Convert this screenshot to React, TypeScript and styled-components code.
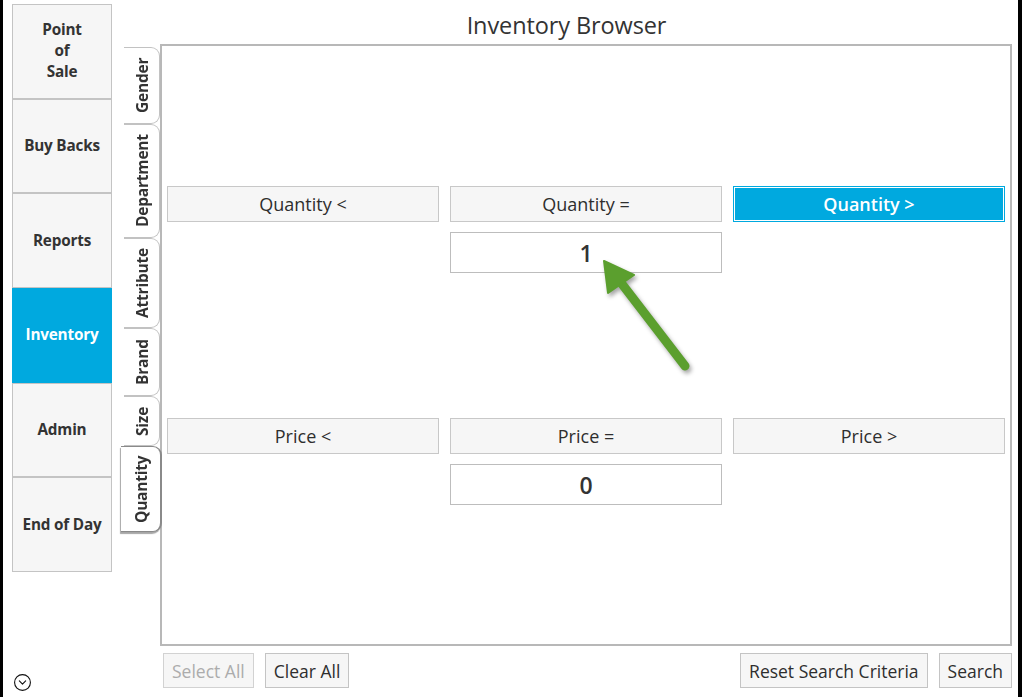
import React from "react";
import styled, { createGlobalStyle } from "styled-components";
import { CircleChevronDown } from "lucide-react";

const Global = createGlobalStyle`
  html, body { margin: 0; padding: 0; background: #fff; }
  body { font-family: "Open Sans", "Noto Sans", sans-serif; color: #333; }
  * { box-sizing: border-box; }
`;

const Frame = styled.div`
  width: 1022px;
  height: 697px;
  display: flex;
  border-left: 3px solid #000;
  border-right: 4px solid #000;
  background: #fff;
  overflow: hidden;
`;

const Sidebar = styled.nav`
  width: 109px;
  padding: 4px 0 6px 9px;
  display: flex;
  flex-direction: column;
`;

const NavList = styled.div`
  height: 568px;
  display: flex;
  flex-direction: column;
`;

const NavButton = styled.div<{ $active?: boolean }>`
  flex: 1;
  display: flex;
  align-items: center;
  justify-content: center;
  text-align: center;
  font-weight: 700;
  font-size: 15.3px;
  line-height: 21px;
  letter-spacing: -0.2px;
  padding-bottom: 1px;
  color: ${(p) => (p.$active ? "#fff" : "#333")};
  background: ${(p) => (p.$active ? "#00a9df" : "#f6f6f6")};
  border: 1px solid ${(p) => (p.$active ? "#00a9df" : "#c4c4c4")};
`;

const Expander = styled.div`
  margin-top: auto;
  padding-left: 1px;
  height: 18px;
  color: #111;
  display: flex;
`;

const Main = styled.main`
  flex: 1;
  display: flex;
  flex-direction: column;
  padding: 0 6px 0 11px;
`;

const Title = styled.h1`
  margin: 0;
  height: 44px;
  font-size: 23.5px;
  font-weight: 400;
  line-height: 50px;
  text-align: center;
  color: #333;
  letter-spacing: -0.1px;
  padding-right: 2px;
`;

const Body = styled.div`
  display: flex;
  height: 602px;
`;

const TabList = styled.div`
  width: 37px;
  padding-top: 3px;
  display: flex;
  flex-direction: column;
  align-items: flex-end;
  position: relative;
  z-index: 2;
`;

const Tab = styled.div<{ $active?: boolean; $h: number }>`
  height: ${(p) => p.$h}px;
  width: ${(p) => (p.$active ? 41 : 36)}px;
  margin-right: ${(p) => (p.$active ? -2 : 0)}px;
  background: #fff;
  border-style: solid;
  border-color: ${(p) => (p.$active ? "#8a8a8a" : "#c2c2c2")};
  border-width: ${(p) => (p.$active ? "1px 0 1px 2px" : "1px 0 1px 1px")};
  border-radius: 9px 0 0 9px;
  display: flex;
  align-items: center;
  justify-content: center;
  writing-mode: vertical-rl;
  transform: rotate(180deg);
  font-weight: 700;
  font-size: 15.5px;
  color: #333;
  letter-spacing: -0.2px;
  box-shadow: ${(p) => (p.$active ? "1px -2px 1px rgba(0,0,0,0.35)" : "none")};
`;

const Panel = styled.section`
  flex: 1;
  position: relative;
  border: 2px solid #b8b8b8;
  padding: 140px 5px 0 5px;
`;

const Group = styled.div`
  display: grid;
  grid-template-columns: repeat(3, 1fr);
  column-gap: 11px;
  row-gap: 10px;
  margin-bottom: 145px;
`;

const CriteriaButton = styled.div<{ $active?: boolean }>`
  height: 36px;
  display: flex;
  align-items: center;
  justify-content: center;
  font-size: 18px;
  color: ${(p) => (p.$active ? "#fff" : "#2e2e2e")};
  font-weight: ${(p) => (p.$active ? 600 : 400)};
  background: ${(p) => (p.$active ? "#00a9df" : "#f6f6f6")};
  border: 1px solid ${(p) => (p.$active ? "#00a9df" : "#c8c8c8")};
  box-shadow: ${(p) => (p.$active ? "inset 0 0 0 1px #fff" : "none")};
`;

const ValueBox = styled.div`
  grid-column: 2;
  height: 41px;
  display: flex;
  align-items: center;
  justify-content: center;
  font-size: 23px;
  font-weight: 600;
  color: #333;
  background: #fff;
  border: 1px solid #bdbdbd;
`;

const Annotation = styled.svg`
  position: absolute;
  left: 430px;
  top: 205px;
  overflow: visible;
  filter: drop-shadow(2px 3px 2px rgba(0, 0, 0, 0.35));
`;

const Footer = styled.footer`
  display: flex;
  gap: 11px;
  padding: 7px 0 0 40px;
`;

const ActionButton = styled.div<{ $disabled?: boolean; $push?: boolean }>`
  height: 35px;
  padding: 0 8px;
  display: flex;
  align-items: center;
  font-size: 17.5px;
  color: ${(p) => (p.$disabled ? "#acacac" : "#2e2e2e")};
  background: #f6f6f6;
  border: 1px solid ${(p) => (p.$disabled ? "#d2d2d2" : "#c4c4c4")};
  margin-left: ${(p) => (p.$push ? "auto" : "0")};
`;

const navItems = [
  { label: ["Point", "of", "Sale"] },
  { label: ["Buy Backs"] },
  { label: ["Reports"] },
  { label: ["Inventory"], active: true },
  { label: ["Admin"] },
  { label: ["End of Day"] },
];

const tabs = [
  { label: "Gender", h: 77 },
  { label: "Department", h: 114 },
  { label: "Attribute", h: 90 },
  { label: "Brand", h: 68 },
  { label: "Size", h: 50 },
  { label: "Quantity", h: 86, active: true },
];

export default function App() {
  return (
    <>
      <Global />
      <Frame>
        <Sidebar>
          <NavList>
            {navItems.map((n) => (
              <NavButton key={n.label.join(" ")} $active={n.active}>
                <div>
                  {n.label.map((l) => (
                    <div key={l}>{l}</div>
                  ))}
                </div>
              </NavButton>
            ))}
          </NavList>
          <Expander>
            <CircleChevronDown size={19} strokeWidth={1.4} />
          </Expander>
        </Sidebar>
        <Main>
          <Title>Inventory Browser</Title>
          <Body>
            <TabList>
              {tabs.map((t) => (
                <Tab key={t.label} $h={t.h} $active={t.active}>
                  {t.label}
                </Tab>
              ))}
            </TabList>
            <Panel>
              <Group>
                <CriteriaButton>Quantity &lt;</CriteriaButton>
                <CriteriaButton>Quantity =</CriteriaButton>
                <CriteriaButton $active>Quantity &gt;</CriteriaButton>
                <ValueBox>1</ValueBox>
              </Group>
              <Group>
                <CriteriaButton>Price &lt;</CriteriaButton>
                <CriteriaButton>Price =</CriteriaButton>
                <CriteriaButton>Price &gt;</CriteriaButton>
                <ValueBox>0</ValueBox>
              </Group>
              <Annotation width="110" height="130" viewBox="0 0 110 130">
                <line x1="30" y1="33" x2="93" y2="115" stroke="#5b9f2e" strokeWidth="9" strokeLinecap="round" />
                <polygon points="12,10 42,24 16,42" fill="#5b9f2e" stroke="#5b9f2e" strokeWidth="2" strokeLinejoin="round" />
              </Annotation>
            </Panel>
          </Body>
          <Footer>
            <ActionButton $disabled>Select All</ActionButton>
            <ActionButton>Clear All</ActionButton>
            <ActionButton $push>Reset Search Criteria</ActionButton>
            <ActionButton>Search</ActionButton>
          </Footer>
        </Main>
      </Frame>
    </>
  );
}
